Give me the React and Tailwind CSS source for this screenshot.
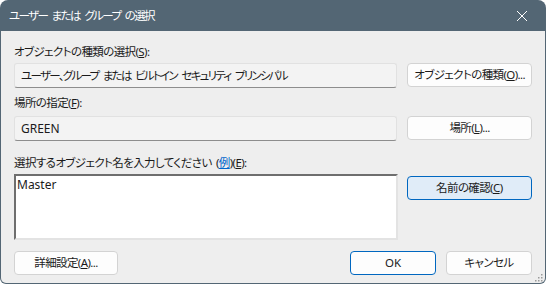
import React from 'react';

function Btn({ children, className = '' }) {
  return (
    <button
      className={`h-[24px] rounded-[4px] border text-[11.5px] leading-none text-[#1b1b1b] whitespace-nowrap flex items-center justify-center ${className}`}
    >
      {children}
    </button>
  );
}

function Label({ children }) {
  return <div className="h-[16px] text-[11.5px] leading-[16px] text-[#1b1b1b] whitespace-nowrap [word-spacing:2px]">{children}</div>;
}

export default function App() {
  return (
    <div className="w-[546px] h-[285px] bg-white font-['Noto_Sans','Noto_Sans_CJK_JP',sans-serif] [font-feature-settings:'palt'] tracking-[-0.6px]">
      <div className="w-[546px] h-[284px] flex flex-col bg-[#536674] rounded-t-[8px] rounded-b-[6px] overflow-hidden">
        {/* title bar */}
        <div className="h-[31px] flex items-center justify-between pl-[9px] pr-[9px] text-white shrink-0">
          <span className="text-[11.5px] leading-none tracking-[-1.6px] [word-spacing:3px]">ユーザー または グループ の選択</span>
          <svg width="30" height="20" viewBox="0 0 30 20">
            <path d="M10 5 L20 15 M20 5 L10 15" stroke="#ffffff" strokeWidth="1" fill="none" />
          </svg>
        </div>

        {/* body */}
        <div className="relative flex-1 mx-px mb-px bg-[#eeeeee] rounded-b-[5px] px-[13px] pt-[13px]">
          <Label>
            オブジェクトの種類の選択(<span className="underline">S</span>):
          </Label>
          <div className="mt-[3px] flex gap-[10px]">
            <div className="w-[384px] h-[25px] bg-[#f3f3f3] border border-[#e1e1e1] border-b-[#8d8d8d] rounded-[3px] px-[6px] flex items-center text-[11.5px] tracking-[-1.7px] [word-spacing:3px] text-[#1b1b1b] whitespace-nowrap">
              ユーザー、グループ または ビルトイン セキュリティ プリンシパル
            </div>
            <Btn className="w-[125px] bg-[#fdfdfd] border-[#d3d3d3]">
              オブジェクトの種類(<span className="underline">O</span>)...
            </Btn>
          </div>

          <div className="mt-[7px]">
            <Label>
              場所の指定(<span className="underline">F</span>):
            </Label>
          </div>
          <div className="mt-[5px] flex gap-[10px]">
            <div className="w-[384px] h-[25px] bg-[#f3f3f3] border border-[#e1e1e1] border-b-[#8d8d8d] rounded-[3px] px-[6px] flex items-center text-[12px] tracking-normal text-[#1b1b1b]">
              GREEN
            </div>
            <Btn className="w-[125px] bg-[#fdfdfd] border-[#d3d3d3]">
              場所(<span className="underline">L</span>)...
            </Btn>
          </div>

          <div className="mt-[14px]">
            <Label>
              選択するオブジェクト名を入力してください (<span className="text-[#0066cc] underline">例</span>)(<span className="underline">E</span>):
            </Label>
          </div>
          <div className="mt-[3px] flex gap-[9px] items-start">
            <div className="w-[385px] h-[66px] bg-white border-2 border-t-[#6e6e6e] border-l-[#6e6e6e] border-r-[#e3e3e3] border-b-[#e3e3e3] px-[1px] pt-[1px] text-[12px] leading-[16px] tracking-normal text-[#1b1b1b]">
              Master
            </div>
            <Btn className="mt-[2px] w-[126px] bg-[#e0ecf8] border-[#0067c0]">
              名前の確認(<span className="underline">C</span>)
            </Btn>
          </div>

          <div className="mt-[11px] flex">
            <Btn className="w-[104px] bg-[#fdfdfd] border-[#d3d3d3]">
              詳細設定(<span className="underline">A</span>)...
            </Btn>
            <div className="flex-1" />
            <Btn className="w-[86px] bg-[#fdfdfd] border-[#0067c0] tracking-normal">OK</Btn>
            <Btn className="ml-[10px] w-[86px] bg-[#fdfdfd] border-[#d3d3d3]">キャンセル</Btn>
          </div>

          <svg className="absolute right-[2px] bottom-[1px]" width="10" height="10" viewBox="0 0 10 10">
            <g fill="#9a9a9a">
              <rect x="8" y="2" width="1.5" height="1.5" />
              <rect x="5" y="5" width="1.5" height="1.5" />
              <rect x="8" y="5" width="1.5" height="1.5" />
              <rect x="2" y="8" width="1.5" height="1.5" />
              <rect x="5" y="8" width="1.5" height="1.5" />
              <rect x="8" y="8" width="1.5" height="1.5" />
            </g>
          </svg>
        </div>
      </div>
    </div>
  );
}
